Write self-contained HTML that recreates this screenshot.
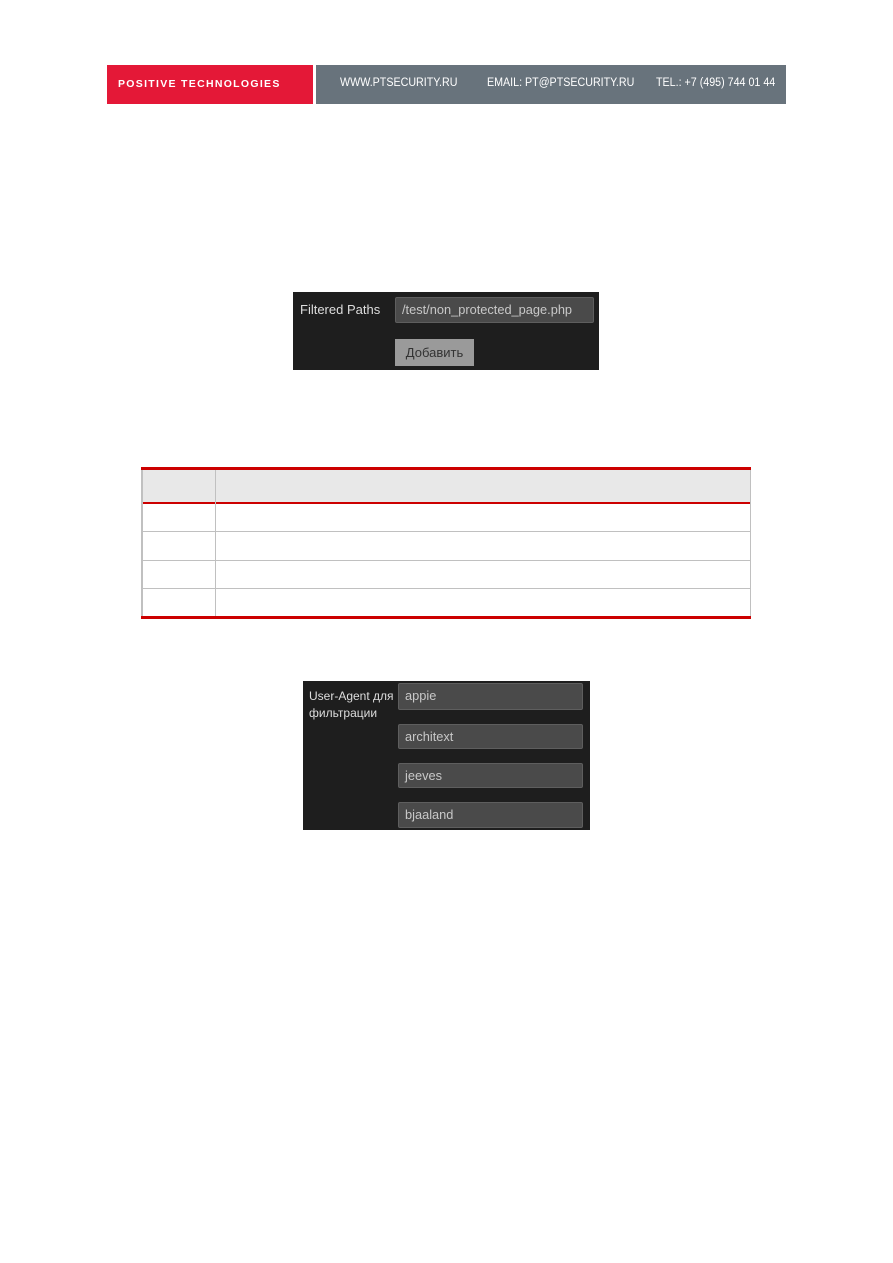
<!DOCTYPE html>
<html><head><meta charset="utf-8"><style>
body{margin:0;width:893px;height:1263px;background:#fff;position:relative;font-family:"Liberation Sans",sans-serif;overflow:hidden}
.a{position:absolute}
.in{position:absolute;background:#4a4a4a;border:1px solid #5e5e5e;border-radius:2px;color:#c8c8c8;font-size:12.8px;box-sizing:border-box;padding-left:6px;line-height:24px}
.h{position:absolute;left:141px;width:610px;height:1px;background:#c0c0c0}
.t{position:absolute;top:77px;color:#fff;font-size:11.5px;white-space:nowrap;transform:scaleX(0.93);transform-origin:left}
</style></head><body>
<div class="a" style="left:107px;top:65px;width:206px;height:39px;background:#e41837"></div>
<div class="a" style="left:118px;top:78px;color:#fff;font-size:10.5px;letter-spacing:1.3px;font-weight:bold">POSITIVE TECHNOLOGIES</div>
<div class="a" style="left:316px;top:65px;width:470px;height:39px;background:#68737c"></div>
<div class="t" style="left:340px">WWW.PTSECURITY.RU</div>
<div class="t" style="left:487px">EMAIL: PT@PTSECURITY.RU</div>
<div class="t" style="left:656px">TEL.: +7 (495) 744 01 44</div>

<div class="a" style="left:293px;top:292px;width:306px;height:78px;background:#1e1e1e"></div>
<div class="a" style="left:300px;top:302px;color:#ddd;font-size:13px">Filtered Paths</div>
<div class="in" style="left:395px;top:297px;width:199px;height:26px">/test/non_protected_page.php</div>
<div class="a" style="left:395px;top:339px;width:79px;height:27px;background:#9a9a9a;color:#333;font-size:13px;line-height:27px;text-align:center">Добавить</div>

<div class="a" style="left:141px;top:467px;width:610px;height:3px;background:#cc0000"></div>
<div class="a" style="left:141px;top:470px;width:610px;height:32px;background:#e8e8e8"></div>
<div class="a" style="left:141px;top:502px;width:610px;height:2px;background:#cc0000"></div>
<div class="h" style="top:531px"></div>
<div class="h" style="top:560px"></div>
<div class="h" style="top:588px"></div>
<div class="a" style="left:141px;top:616px;width:610px;height:3px;background:#cc0000"></div>
<div class="a" style="left:141px;top:470px;width:2px;height:146px;background:#c0c0c0"></div>
<div class="a" style="left:215px;top:470px;width:1px;height:146px;background:#c0c0c0"></div>
<div class="a" style="left:750px;top:470px;width:1px;height:146px;background:#c0c0c0"></div>

<div class="a" style="left:303px;top:681px;width:287px;height:149px;background:#1e1e1e"></div>
<div class="a" style="left:309px;top:688px;color:#ddd;font-size:12px;line-height:17px">User-Agent для<br>фильтрации</div>
<div class="in" style="left:398px;top:683px;width:185px;height:27px">appie</div>
<div class="in" style="left:398px;top:724px;width:185px;height:25px">architext</div>
<div class="in" style="left:398px;top:763px;width:185px;height:25px">jeeves</div>
<div class="in" style="left:398px;top:802px;width:185px;height:26px">bjaaland</div>
</body></html>
